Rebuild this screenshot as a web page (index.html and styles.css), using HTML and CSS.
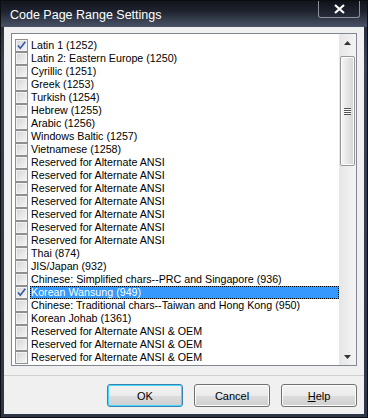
FILE: index.html
```html
<!DOCTYPE html>
<html lang="en">
<head>
    <meta charset="UTF-8">
    <title>Code Page Range Settings</title>
    <link rel="stylesheet" href="styles.css">
</head>
<body>
    <div class="window">
        <div class="titlebar">
            <span class="title">Code Page Range Settings</span>
            <div class="close">
                <svg width="13" height="10" viewBox="0 0 13 10"><path d="M2 1 L11 9 M11 1 L2 9" stroke="#fff" stroke-width="2.2"/></svg>
            </div>
        </div>
        <div class="client">
            <div class="listbox">
                <ul class="items" id="items"></ul>
                <div class="scrollbar">
                    <div class="arrow"><svg width="7" height="4" viewBox="0 0 7 4"><path d="M0 4 L3.5 0 L7 4 Z" fill="#333"/></svg></div>
                    <div class="thumb"><span class="grip"></span></div>
                    <div class="track"></div>
                    <div class="arrow"><svg width="7" height="4" viewBox="0 0 7 4"><path d="M0 0 L3.5 4 L7 0 Z" fill="#333"/></svg></div>
                </div>
            </div>
            <div class="buttons">
                <button class="btn default">OK</button>
                <button class="btn">Cancel</button>
                <button class="btn"><u>H</u>elp</button>
            </div>
        </div>
    </div>
    <script>
    const pages = [
        ['Latin 1 (1252)', true],
        ['Latin 2: Eastern Europe (1250)'],
        ['Cyrillic (1251)'],
        ['Greek (1253)'],
        ['Turkish (1254)'],
        ['Hebrew (1255)'],
        ['Arabic (1256)'],
        ['Windows Baltic (1257)'],
        ['Vietnamese (1258)'],
        ['Reserved for Alternate ANSI'],
        ['Reserved for Alternate ANSI'],
        ['Reserved for Alternate ANSI'],
        ['Reserved for Alternate ANSI'],
        ['Reserved for Alternate ANSI'],
        ['Reserved for Alternate ANSI'],
        ['Reserved for Alternate ANSI'],
        ['Thai (874)'],
        ['JIS/Japan (932)'],
        ['Chinese: Simplified chars--PRC and Singapore (936)'],
        ['Korean Wansung (949)', true, true],
        ['Chinese: Traditional chars--Taiwan and Hong Kong (950)'],
        ['Korean Johab (1361)'],
        ['Reserved for Alternate ANSI & OEM'],
        ['Reserved for Alternate ANSI & OEM'],
        ['Reserved for Alternate ANSI & OEM']
    ];
    const check = '<svg width="11" height="11" viewBox="0 0 11 11"><path d="M2 5.5 L4.3 8.3 L9.3 1.8" stroke="#3456a8" stroke-width="1.6" fill="none"/></svg>';
    const list = document.getElementById('items');
    pages.forEach(([label, checked, selected]) => {
        const li = document.createElement('li');
        li.innerHTML = `<span class="box">${checked ? check : ''}</span><span class="label${selected ? ' selected' : ''}"></span>`;
        li.querySelector('.label').textContent = label;
        list.appendChild(li);
    });
    </script>
</body>
</html>
```

FILE: styles.css
```css
body { margin: 0; font-family: "Liberation Sans", Arial, sans-serif; }
.window { width: 368px; height: 418px; box-sizing: border-box; display: flex; flex-direction: column; background: linear-gradient(#1a1e27, #3a4256 60px, #2f3647); border: 1px solid #0c0e12; }
.titlebar { height: 26px; display: flex; justify-content: space-between; align-items: flex-start; background: linear-gradient(#12151c, #1e232f 40%, #4a5468); }
.title { color: #fff; font-size: 12.5px; padding: 7px 0 0 9px; }
.close { width: 40px; height: 16px; margin-right: 7px; border: 1px solid #8a909e; border-top: none; border-radius: 0 0 3px 3px; background: linear-gradient(#0f1218, #262c3a); display: flex; align-items: center; justify-content: center; }
.client { flex: 1; margin: 0 3px 3px; background: #f0f0f0; display: flex; flex-direction: column; }
.listbox { height: 333px; box-sizing: border-box; margin: 6px 7px 0; border: 1px solid #828790; background: #fff; display: flex; }
.items { flex: 1; margin: 0; padding: 5px 0 0; list-style: none; overflow: hidden; font-size: 10.7px; }
.items li { height: 13px; display: flex; align-items: center; white-space: nowrap; }
.box { width: 11px; height: 11px; margin: 0 2px 0 3px; flex: none; border: 1px solid #8f8f8f; background: linear-gradient(135deg, #d4d4d4, #f7f7f7); box-shadow: inset 0 0 0 1px #f2f2f2; display: flex; }
.label { flex: 1; height: 13px; line-height: 13px; padding-left: 1px; color: #000; box-sizing: border-box; }
.label.selected { background: #3399ff; color: #fff; outline: 1px dotted #000; outline-offset: -1px; }
.scrollbar { width: 17px; display: flex; flex-direction: column; background: linear-gradient(90deg, #e6e6e6, #f4f4f4); }
.arrow { height: 17px; display: flex; align-items: center; justify-content: center; }
.thumb { height: 110px; margin: 5px 1px 0; box-sizing: border-box; border: 1px solid #979797; border-radius: 2px; background: linear-gradient(90deg, #f6f6f6, #e2e2e2 60%, #d4d4d4); box-shadow: inset 0 0 0 1px #fcfcfc; display: flex; align-items: center; justify-content: center; }
.grip { width: 7px; height: 7px; background: repeating-linear-gradient(#555 0 1px, #fff 1px 2px); }
.track { flex: 1; }
.buttons { margin-top: 9px; border-top: 1px solid #d0d0d0; padding: 8px 0 0 103px; display: flex; gap: 11px; }
.btn { width: 76px; height: 23px; font-family: "Liberation Sans", Arial, sans-serif; font-size: 11px; color: #000; border: 1px solid #707070; border-radius: 3px; background: linear-gradient(#f2f2f2 0, #ebebeb 50%, #dddddd 50%, #cfcfcf); box-shadow: inset 0 0 0 1px #fcfcfc; padding: 0; }
.btn.default { border-color: #3c7fb1; box-shadow: inset 0 0 0 1px #48d8fb; }
```
